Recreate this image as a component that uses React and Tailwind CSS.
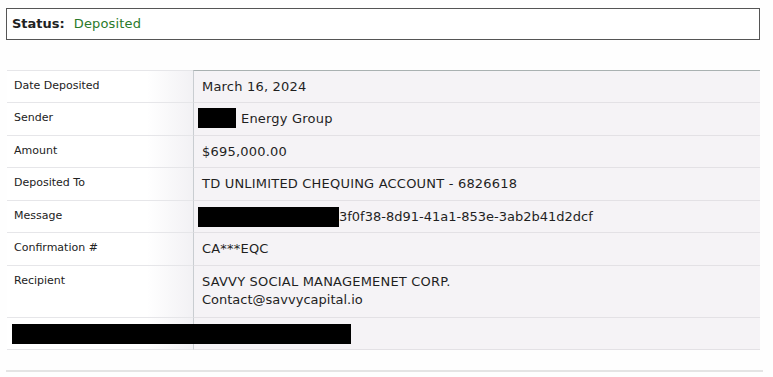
export default function App() {
  const rows = [
    { label: "Date Deposited", h: "h-[33px]", value: <span>March 16, 2024</span> },
    {
      label: "Sender",
      h: "h-[33px]",
      value: (
        <span className="flex items-center">
          <span className="inline-block w-[38px] h-[20px] bg-black -ml-[4px] mr-[5px] -mt-[4px] -mb-[2px]" />
          Energy Group
        </span>
      ),
    },
    { label: "Amount", h: "h-[32px]", value: <span>$695,000.00</span> },
    { label: "Deposited To", h: "h-[33px]", value: <span>TD UNLIMITED CHEQUING ACCOUNT - 6826618</span> },
    {
      label: "Message",
      h: "h-[32px]",
      value: (
        <span className="flex items-center tracking-[0px]">
          <span className="inline-block w-[141px] h-[20px] bg-black -ml-[4px] -my-[3px]" />
          3f0f38-8d91-41a1-853e-3ab2b41d2dcf
        </span>
      ),
    },
    { label: "Confirmation #", h: "h-[33px]", value: <span>CA***EQC</span> },
    {
      label: "Recipient",
      h: "h-[52px]",
      value: (
        <div className="leading-[18px] -mt-[1px]">
          <div>SAVVY SOCIAL MANAGEMENET CORP.</div>
          <div className="tracking-[0px]">Contact@savvycapital.io</div>
        </div>
      ),
    },
  ];

  return (
    <div className="w-[773px] h-[377px] bg-[#fefefe] text-[#1f1f1f] font-['DejaVu_Sans',Verdana,sans-serif] overflow-hidden">
      {/* status banner */}
      <div className="ml-[6px] mt-[8px] w-[754px] h-[32px] border border-[#555] bg-white flex items-center px-[5px] text-[13px]">
        <span className="font-bold text-[#222]">Status:</span>
        <span className="ml-[9px] text-[#2a7a2a] tracking-[0.15px]">Deposited</span>
      </div>

      {/* detail table */}
      <div className="ml-[7px] mt-[30px] w-[753px]">
        {rows.map((r, i) => (
          <div key={i} className={`flex ${r.h}`}>
            <div
              className={`w-[186px] border-b border-[#e6e6e9] ${i === 0 ? "border-t" : ""} bg-[linear-gradient(to_right,#ffffff_75%,#f2f1f4)] pl-[7px] pt-[8px] text-[11px] leading-[14px] text-[#222]`}
            >
              {r.label}
            </div>
            <div
              className={`flex-1 border-l border-[#c9cdd1] border-b border-b-[#e3e1e5] ${i === 0 ? "border-t border-t-[#a9b1b1]" : ""} bg-[#f5f3f6] pl-[8px] pt-[8px] text-[13px] leading-[16px] tracking-[0.2px] text-[#1f1f1f]`}
            >
              {r.value}
            </div>
          </div>
        ))}
        <div className="flex h-[32px] relative">
          <div className="w-[186px] border-b border-[#e6e6e9] bg-[linear-gradient(to_right,#ffffff_75%,#f2f1f4)]" />
          <div className="flex-1 border-l border-[#c9cdd1] border-b border-b-[#e3e1e5] bg-[#f5f3f6]" />
          <span className="absolute left-[5px] top-[6px] w-[339px] h-[20px] bg-black" />
        </div>
      </div>

      <div className="ml-[6px] mt-[20px] w-[757px] h-[2px] bg-[#e4e4e4]" />
    </div>
  );
}
